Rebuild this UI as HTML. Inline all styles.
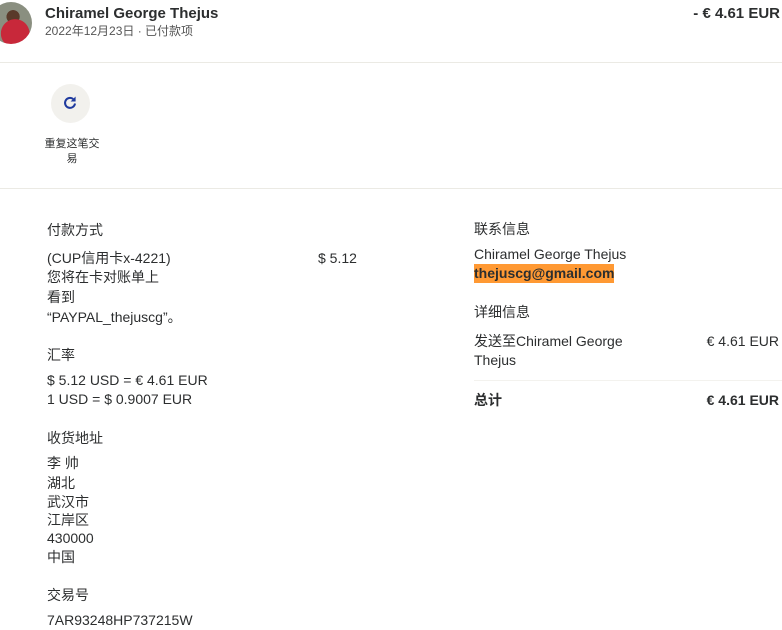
<html><head><style>
body{margin:0;width:782px;height:629px;background:#fff;font-family:"Liberation Sans","Noto Sans CJK SC",sans-serif;color:#2c2e2f;position:relative;overflow:hidden;font-size:14px}
.a{position:absolute;line-height:20px;white-space:nowrap}
.b{font-weight:bold}
</style></head><body>
<div class="a" style="left:-10px;top:2px;width:42px;height:42px;border-radius:50%;background:radial-gradient(circle at 60% 75%,#c8283a 0 35%,transparent 36%),radial-gradient(circle at 55% 35%,#5a3a2a 0 18%,transparent 19%),#8a8f80"></div>
<div class="a b" style="left:45px;top:4px;font-size:15px">Chiramel George Thejus</div>
<div class="a" style="left:45px;top:21px;font-size:12px;color:#555">2022年12月23日 · 已付款项</div>
<div class="a b" style="right:2px;top:4px;font-size:15px">- € 4.61 EUR</div>
<div style="position:absolute;left:0;right:0;top:62px;height:1px;background:#ebeae4"></div>
<div style="position:absolute;left:51px;top:84px;width:39px;height:39px;border-radius:50%;background:#f2f1ed"></div>
<svg style="position:absolute;left:62px;top:95px" width="16" height="16" viewBox="0 0 16 16"><path d="M13 8.5A5 5 0 1 1 11.2 4" fill="none" stroke="#1f3a9e" stroke-width="2"/><path d="M13.6 1.5v5h-5z" fill="#1f3a9e"/></svg>
<div class="a" style="left:40px;top:137px;width:64px;text-align:center;font-size:11px;line-height:15px;white-space:normal">重复这笔交易</div>
<div style="position:absolute;left:0;right:0;top:188px;height:1px;background:#ebeae4"></div>
<div class="a" style="left:47px;top:220px">付款方式</div>
<div class="a" style="left:47px;top:248px">(CUP信用卡x-4221)</div>
<div class="a" style="left:318px;top:248px">$ 5.12</div>
<div class="a" style="left:47px;top:267px">您将在卡对账单上</div>
<div class="a" style="left:47px;top:287px">看到</div>
<div class="a" style="left:47px;top:307px">“PAYPAL_thejuscg”。</div>
<div class="a" style="left:47px;top:345px">汇率</div>
<div class="a" style="left:47px;top:370px">$ 5.12 USD = € 4.61 EUR</div>
<div class="a" style="left:47px;top:389px">1 USD = $ 0.9007 EUR</div>
<div class="a" style="left:47px;top:428px">收货地址</div>
<div class="a" style="left:47px;top:453px">李 帅</div>
<div class="a" style="left:47px;top:473px">湖北</div>
<div class="a" style="left:47px;top:492px">武汉市</div>
<div class="a" style="left:47px;top:510px">江岸区</div>
<div class="a" style="left:47px;top:528px">430000</div>
<div class="a" style="left:47px;top:547px">中国</div>
<div class="a" style="left:47px;top:585px">交易号</div>
<div class="a" style="left:47px;top:610px">7AR93248HP737215W</div>
<div class="a" style="left:474px;top:219px">联系信息</div>
<div class="a" style="left:474px;top:244px">Chiramel George Thejus</div>
<div class="a b" style="left:474px;top:264px;background:#ff9933;line-height:19px">thejuscg@gmail.com</div>
<div class="a" style="left:474px;top:302px">详细信息</div>
<div class="a" style="left:474px;top:331px">发送至Chiramel George</div>
<div class="a" style="left:474px;top:350px">Thejus</div>
<div class="a" style="right:3px;top:331px">€ 4.61 EUR</div>
<div style="position:absolute;left:474px;right:0;top:380px;height:1px;background:#f3f2ee"></div>
<div class="a b" style="left:474px;top:390px">总计</div>
<div class="a b" style="right:3px;top:390px">€ 4.61 EUR</div>
</body></html>
